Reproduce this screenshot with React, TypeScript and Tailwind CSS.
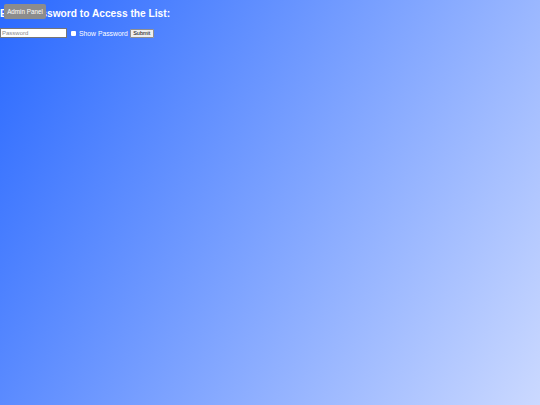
export default function App() {
  return (
    <div className="relative min-h-[405px] w-full bg-[linear-gradient(120deg,#2a69ff_0%,#cbd9ff_100%)] font-['Liberation_Sans',Arial,sans-serif]">
      <button className="absolute left-[4px] top-[4px] h-[15px] w-[42px] rounded-[2px] bg-[#8c8c8c] text-[6.3px] leading-[15px] text-white">
        Admin Panel
      </button>
      <div className="pt-[7px]">
        <h2 className="m-0 text-[10.2px] font-bold leading-[14px] text-white">
          Enter Password to Access the List:
        </h2>
        <div className="mt-[7px] flex items-center">
          <input
            type="password"
            placeholder="Password"
            className="box-content h-[8px] w-[63px] border border-[#767676] bg-white px-[1px] text-[6px] leading-[6px] text-black placeholder:text-[#8a8a8a]"
          />
          <input
            type="checkbox"
            className="ml-[4px] h-[5px] w-[5px] appearance-none rounded-[1px] border-0 bg-white"
          />
          <label className="ml-[3px] text-[6.8px] leading-[9px] text-white">
            Show Password
          </label>
          <button className="ml-[2px] h-[9px] w-[24px] rounded-[1px] border border-[#8f8f8f] bg-[#efefef] text-[5.5px] leading-[7px] text-black">
            Submit
          </button>
        </div>
      </div>
    </div>
  );
}
